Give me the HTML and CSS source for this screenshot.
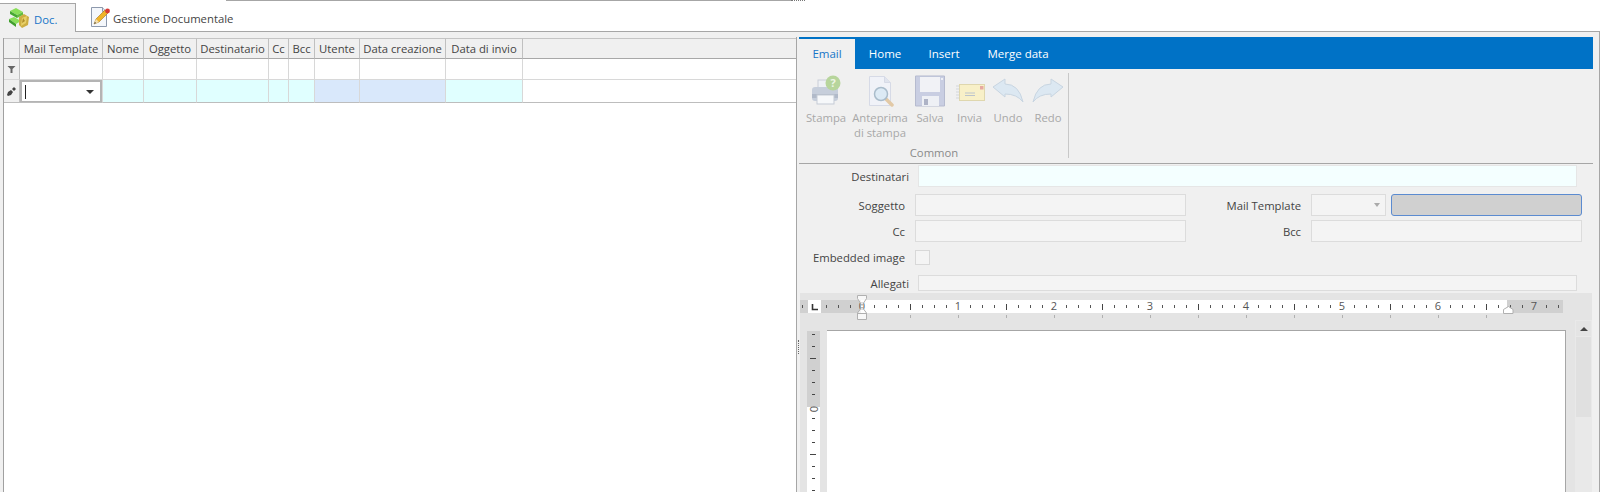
FILE: index.html
```html
<!DOCTYPE html>
<html lang="it">
<head>
<meta charset="utf-8">
<title>Doc.</title>
<link rel="stylesheet" href="styles.css">
</head>
<body>
<div class="topline"><span class="topline-solid"></span><span class="topline-dots"></span></div>
<div class="tabstrip">
  <div class="tab tab-active">
    <svg class="tab-icon" width="20" height="20" viewBox="0 0 20 20">
      <path d="M1 3l6-3 7 4-6 3z" fill="#8adf58"/><path d="M1 3l7 4v3L1 6z" fill="#46a832"/><path d="M8 7l6-3v3l-6 3z" fill="#62bd40"/>
      <path d="M0 11l5-2 7 4-5 3z" fill="#8adf58"/><path d="M0 11l7 5v3l-7-5z" fill="#3f9f2c"/>
      <path d="M10 9l5-3 5 3-1 8-6 3-3-3z" fill="#cdae42"/><path d="M13 10l5-2-1 7-5 3z" fill="#e8d068"/><path d="M14 10l2 3-3 2z" fill="#ad8c2a"/>
    </svg>
    <span>Doc.</span>
  </div>
  <div class="tab">
    <svg class="tab-icon" width="20" height="20" viewBox="0 0 20 20">
      <path d="M1.500 .5h11l4 4v15h-15z" fill="#f4f7fb" stroke="#8d99ad"/><path d="M12.500 .5v4h4" fill="#dfe5ee" stroke="#8d99ad"/>
      <path d="M4 17l2-5 9-9 3 3-9 9z" fill="#efb428" stroke="#a8741a" stroke-width=".6"/><path d="M4 17l2-5 3 3z" fill="#f3dfae"/><path d="M4 17l1-2 1 1z" fill="#333"/><circle cx="17.500" cy="4" r="2.400" fill="#d83a34"/>
    </svg>
    <span>Gestione Documentale</span>
  </div>
  <div class="tab-rest"></div>
</div>
<main class="workspace">
  <section class="list-pane">
    <div class="grid">
      <div class="cell head"></div>
      <div class="cell head">Mail Template</div>
      <div class="cell head">Nome</div>
      <div class="cell head">Oggetto</div>
      <div class="cell head">Destinatario</div>
      <div class="cell head">Cc</div>
      <div class="cell head">Bcc</div>
      <div class="cell head">Utente</div>
      <div class="cell head">Data creazione</div>
      <div class="cell head">Data di invio</div>
      <div class="cell head last"></div>

      <div class="cell indicator">
        <svg width="9" height="9" viewBox="0 0 9 9"><path d="M.5 1h8L5.500 4v4h-2V4z" fill="#666"/></svg>
      </div>
      <div class="cell"></div><div class="cell"></div><div class="cell"></div><div class="cell"></div><div class="cell"></div><div class="cell"></div><div class="cell"></div><div class="cell"></div><div class="cell"></div><div class="cell last"></div>

      <div class="cell indicator edit-row">
        <svg width="9" height="9" viewBox="0 0 9 9"><path d="M0 8l1-3 3-2 2 2-2 3-3 1z" fill="#444"/><path d="M5 2l2-2 2 2-2 2z" fill="#444"/></svg>
      </div>
      <div class="cell edit-row combo-cell"><div class="combo"><span class="caret"></span><span class="arrow"></span></div></div>
      <div class="cell edit-row cyan"></div><div class="cell edit-row cyan"></div><div class="cell edit-row cyan"></div><div class="cell edit-row cyan"></div><div class="cell edit-row cyan"></div>
      <div class="cell edit-row blue"></div><div class="cell edit-row blue"></div>
      <div class="cell edit-row cyan"></div><div class="cell edit-row last"></div>
    </div>
  </section>

  <section class="detail-pane">
    <span class="grip"></span>
    <nav class="ribbon-tabs">
      <span class="rtab rtab-active">Email</span>
      <span class="rtab rtab-home">Home</span>
      <span class="rtab rtab-insert">Insert</span>
      <span class="rtab rtab-merge">Merge data</span>
    </nav>
    <div class="ribbon">
      <div class="rgroup">
        <div class="rbuttons">
          <div class="rbtn w50">
            <svg class="ricon" width="32" height="32" viewBox="1 0 32 32">
              <rect x="9" y="5" width="16" height="10" fill="#eef1f5" stroke="#c9ced7"/>
              <path d="M3 15q0-3 3-3h20q3 0 3 3v8q0 3-3 3H6q-3 0-3-3z" fill="#c6cedb"/>
              <rect x="3" y="19" width="26" height="4" fill="#b1bac9"/>
              <rect x="8" y="20" width="17" height="9" fill="#f6f8fa" stroke="#c5cbd5"/>
              <circle cx="24" cy="8" r="7.500" fill="#b7d59c"/>
              <text x="24" y="12" class="qmark">?</text>
            </svg>
            <span>Stampa</span>
          </div>
          <div class="rbtn w58">
            <svg class="ricon" width="32" height="32" viewBox="0 0 32 32">
              <path d="M5.500 1.500h15l6 6v23h-21z" fill="#f0f2f8" stroke="#d6dae6"/>
              <path d="M20.500 1.500v6h6" fill="#e0e4ee" stroke="#d6dae6"/>
              <path d="M22 24l6 6" stroke="#e2c9a6" stroke-width="3.500" stroke-linecap="round"/>
              <circle cx="17" cy="19" r="6.500" fill="#dceaf5" stroke="#a9bccb" stroke-width="1.500"/>
            </svg>
            <span>Anteprima<br>di stampa</span>
          </div>
          <div class="rbtn w42">
            <svg class="ricon" width="32" height="32" viewBox="0 0 32 32">
              <path d="M1.500 1h29v30H1.500z" fill="#c9cee2" stroke="#b6bbcf"/>
              <rect x="6" y="2" width="20" height="15" fill="#f1f2f6"/>
              <rect x="27" y="3" width="2" height="2" fill="#eef0f6"/>
              <rect x="8" y="21" width="17" height="10" fill="#eef0f5"/>
              <rect x="10" y="24" width="4" height="6" fill="#aeb3c6"/>
            </svg>
            <span>Salva</span>
          </div>
          <div class="rbtn w37">
            <svg class="ricon" width="30" height="32" viewBox="-2 0 30 32">
              <path d="M-1 11h5M-1 14h5M-1 17h5M-1 20h5M-1 23h5" stroke="#d3d6da"/>
              <rect x="2.500" y="9.500" width="25" height="16" fill="#f8f0c8" stroke="#dfd7ae"/>
              <rect x="23" y="11" width="3.500" height="3.500" fill="#e7a9a0"/>
              <path d="M8 18h10M8 20.500h10" stroke="#bcc4cc"/>
            </svg>
            <span>Invia</span>
          </div>
          <div class="rbtn w40">
            <svg class="ricon" width="32" height="32" viewBox="0 0 32 32">
              <path d="M1 12l12-8v5q14 0 18 18q-6-8-18-8v3z" fill="#dce8f2" stroke="#c8d5e1" stroke-linejoin="round"/>
            </svg>
            <span>Undo</span>
          </div>
          <div class="rbtn w40">
            <svg class="ricon" width="32" height="32" viewBox="0 0 32 32">
              <path d="M31 12l-12-8v5q-14 0-18 18q6-8 18-8v3z" fill="#dce8f2" stroke="#c8d5e1" stroke-linejoin="round"/>
            </svg>
            <span>Redo</span>
          </div>
        </div>
        <div class="rgroup-name">Common</div>
      </div>
    </div>

    <div class="form">
      <div class="frow frow-dest">
        <label class="flabel wide">Destinatari</label>
        <div class="finput dest"></div>
      </div>
      <div class="frow frow-subject">
        <label class="flabel">Soggetto</label>
        <div class="finput half"></div>
        <label class="flabel second">Mail Template</label>
        <div class="fcombo"><span class="arrow arrow-light"></span></div>
        <div class="fbutton"></div>
      </div>
      <div class="frow frow-cc">
        <label class="flabel">Cc</label>
        <div class="finput half"></div>
        <label class="flabel second">Bcc</label>
        <div class="finput half"></div>
      </div>
      <div class="frow frow-embed">
        <label class="flabel">Embedded image</label>
        <div class="fcheck"></div>
      </div>
      <div class="frow frow-attach">
        <label class="flabel wide">Allegati</label>
        <div class="finput attach"></div>
      </div>
    </div>

    <div class="editor">
      <svg class="hruler" width="764" height="36" viewBox="0 0 764 36">
        <defs>
          <pattern id="ticks" patternUnits="userSpaceOnUse" x="62" y="6" width="96" height="13">
            <path d="M12.500 5v3M24.500 5v3M36.500 5v3M60.500 5v3M72.500 5v3M84.500 5v3" stroke="#555"/>
            <path d="M48.500 4v6" stroke="#444"/>
          </pattern>
          <pattern id="low" patternUnits="userSpaceOnUse" x="62" y="21" width="48" height="3">
            <path d="M0.500 0v3" stroke="#b0b0b0"/>
          </pattern>
        </defs>
        <rect x="0" y="6" width="763" height="13" fill="#d0d0d0"/>
        <rect x="61" y="6" width="646" height="13" fill="#fff"/>
        <rect x="0" y="6" width="763" height="13" fill="url(#ticks)"/>
        <rect x="8" y="6" width="13" height="13" fill="#fff"/>
        <path d="M12.500 10v5.500h5.500" fill="none" stroke="#333" stroke-width="1.600"/>
        <rect x="110" y="21" width="577" height="3" fill="url(#low)"/>
        <text x="62" y="16" class="rnum">0</text>
        <text x="158" y="16" class="rnum">1</text>
        <text x="254" y="16" class="rnum">2</text>
        <text x="350" y="16" class="rnum">3</text>
        <text x="446" y="16" class="rnum">4</text>
        <text x="542" y="16" class="rnum">5</text>
        <text x="638" y="16" class="rnum">6</text>
        <text x="734" y="16" class="rnum">7</text>
        <path d="M57.500 1.500h9v3L62 11.500 57.500 4.500zM62 13l4.500 6v6.500h-9V19z" fill="#fff" fill-opacity=".75" stroke="#b0b0b0"/>
        <path d="M57.500 19.500h9" stroke="#b0b0b0"/>
        <path d="M703.500 19.500v-4l5-3 4.500 3v4z" fill="#fff" stroke="#b0b0b0"/>
      </svg>
      <div class="editor-body">
        <svg class="vruler" width="13" height="161" viewBox="0 0 13 161">
          <rect width="13" height="161" fill="#fff"/>
          <rect width="13" height="76" fill="#d0d0d0"/>
          <path d="M5 3.500h3M5 15.500h3M5 39.500h3M5 51.500h3M5 63.500h3M5 87.500h3M5 99.500h3M5 111.500h3M5 135.500h3M5 147.500h3M5 159.500h3" stroke="#444"/>
          <path d="M3 27.500h6M3 123.500h6" stroke="#444"/>
          <text class="rnum" transform="translate(10.500 78) rotate(-90)" x="0" y="0">0</text>
        </svg>
        <div class="page"></div>
        <div class="scrollbar">
          <div class="sb-up"><span class="sb-arrow"></span></div>
          <div class="sb-thumb"></div>
        </div>
      </div>
    </div>
  </section>
</main>
</body>
</html>
```

FILE: styles.css
```css
* { box-sizing: border-box; }
html, body { margin: 0; height: 492px; overflow: hidden; background: #fff; }
body { font-family: "Open Sans", "Liberation Sans", sans-serif; font-size: 11.300px; color: #444; display: flex; flex-direction: column; }

.topline { height: 1px; display: flex; padding-left: 226px; flex: none; }
.topline-solid { width: 565px; height: 1px; background: #a6a6a6; }
.topline-dots { width: 14px; height: 1px; border-top: 1px dotted #777; }

.tabstrip { height: 29px; margin-top: 2px; display: flex; align-items: stretch; padding-right: 3px; flex: none; }
.tab { display: flex; align-items: center; gap: 3px; border-bottom: 1px solid #a6a6a6; color: #444; white-space: nowrap; }
.tab span { padding-top: 3px; }
.tab + .tab { padding: 0 8px 0 14px; }
.tab-active { width: 76px; gap: 5px; padding: 0 0 0 9px; background: #f0f0f0; border: 1px solid #a6a6a6; border-left: 0; border-bottom: 0; color: #1675c8; }
.tab-icon { flex: none; }
.tab-rest { flex: 1; border-bottom: 1px solid #a6a6a6; }

.workspace { flex: 1; display: flex; min-height: 0; background: #f0f0f0; padding-top: 5px; margin-right: 3px; border-right: 1px solid #a6a6a6; }

.list-pane { width: 796px; flex: none; padding: 1px 0 0 3px; }
.grid { height: 100%; background: #fff; border-left: 1px solid #a0a0a0; display: grid; grid-template-columns: 16px 83px 41px 53px 72px 20px 26px 45px 86px 77px 1fr; grid-template-rows: 21px 21px 23px; }
.cell { border-right: 1px solid #d8d8d8; border-bottom: 1px solid #d8d8d8; min-width: 0; }
.head { background: #f0f0f0; border-top: 1px solid #c4c4c4; border-right-color: #c0c0c0; border-bottom-color: #a8a8a8; display: flex; align-items: center; justify-content: center; white-space: nowrap; color: #444; }
.last { border-right: 0; }
.indicator { background: #f0f0f0; display: flex; align-items: center; justify-content: center; border-right-color: #c0c0c0; }
.edit-row { border-bottom: 1px solid #bdbdbd; }
.cyan { background: #e0ffff; }
.blue { background: #d9e8fb; }
.combo-cell { padding: 0; background: #fff; }
.combo { height: 100%; border: 2px solid #b4b4b4; border-bottom-width: 1px; display: flex; align-items: center; justify-content: space-between; padding: 0 6px 0 3px; }
.caret { width: 1px; height: 14px; background: #222; }
.arrow { width: 0; height: 0; border-left: 4px solid transparent; border-right: 4px solid transparent; border-top: 4px solid #333; }
.arrow-light { border-top-color: #aaa; border-left-width: 3.500px; border-right-width: 3.500px; }

.detail-pane { flex: 1; min-width: 0; border-left: 1px solid #a6a6a6; padding: 0 6px 0 2px; position: relative; display: flex; flex-direction: column; }
.grip { position: absolute; left: 1px; top: 303px; width: 1px; height: 14px; border-left: 1px dotted #666; }

.ribbon-tabs { height: 32px; background: #0072c6; display: flex; align-items: flex-end; color: #fff; flex: none; }
.rtab { height: 30px; font-size: 11.500px; display: flex; align-items: center; justify-content: center; padding-bottom: 2px; }
.rtab-active { width: 56px; background: #f0f0f0; color: #1675c8; }
.rtab-home { width: 60px; }
.rtab-insert { width: 58px; }
.rtab-merge { width: 90px; }

.ribbon { height: 95px; flex: none; border-bottom: 1px solid #a6a6a6; padding: 4px 0 0 2px; }
.rgroup { width: 268px; height: 85px; border-right: 1px solid #c8c8c8; display: flex; flex-direction: column; }
.rbuttons { display: flex; height: 75px; flex: none; }
.rbtn { display: flex; flex-direction: column; align-items: center; color: #a8a8a8; text-align: center; line-height: 15px; }
.w50 { width: 50px; } .w58 { width: 58px; } .w42 { width: 42px; } .w37 { width: 37px; } .w40 { width: 40px; }
.ricon { flex: none; margin-bottom: 3px; margin-top: 2px; }
.qmark { font: bold 11px "Open Sans", sans-serif; fill: #eef5e6; text-anchor: middle; }
.rgroup-name { text-align: center; color: #8a8a8a; line-height: 10px; padding-right: 1px; flex: none; }

.form { flex: none; height: 129px; display: flex; flex-direction: column; color: #444; }
.frow { display: flex; align-items: center; flex: none; }
.frow-dest { height: 22px; margin-top: 1px; }
.frow-subject { height: 22px; margin-top: 7px; }
.frow-cc { height: 22px; margin-top: 4px; }
.frow-embed { height: 15px; margin-top: 8px; }
.frow-attach { height: 16px; margin-top: 10px; }
.flabel { width: 106px; text-align: right; margin-right: 10px; white-space: nowrap; flex: none; }
.flabel.wide { width: 110px; margin-right: 9px; }
.flabel.second { width: 115px; }
.finput { height: 100%; border: 1px solid #dcdcdc; background: #f4f4f4; }
.half { width: 271px; }
.dest { width: 659px; background: #f4ffff; border-color: #e6e6e6; }
.attach { width: 659px; }
.fcombo { width: 75px; height: 100%; border: 1px solid #dcdcdc; background: #f4f4f4; display: flex; align-items: center; justify-content: flex-end; padding-right: 5px; }
.fbutton { width: 191px; height: 100%; margin-left: 5px; background: #d0d0d0; border: 1px solid #5b8bd0; border-radius: 3px; }
.fcheck { width: 15px; height: 15px; border: 1px solid #d8d8d8; background: #f4f4f4; }

.editor { flex: 1; min-height: 0; margin: 0 1px; background: #e4e4e4; overflow: hidden; display: flex; flex-direction: column; }
.hruler { display: block; flex: none; margin-top: 1px; }
.rnum { font: 11px "Open Sans", sans-serif; fill: #555; text-anchor: middle; }
.editor-body { flex: 1; display: flex; align-items: flex-start; min-height: 0; }
.vruler { flex: none; margin: 1px 7px 0 7px; display: block; }
.page { width: 739px; height: 170px; background: #fff; border-top: 1px solid #a6a6a6; border-right: 1px solid #a6a6a6; flex: none; }
.scrollbar { width: 17px; height: 172px; margin: -10px 0 0 9px; background: #e9e9e9; padding: 1px 1px 0 1px; flex: none; display: flex; flex-direction: column; gap: 1px; }
.sb-up { height: 15px; background: #e4e4e4; display: flex; align-items: center; justify-content: center; }
.sb-arrow { width: 0; height: 0; border-left: 4px solid transparent; border-right: 4px solid transparent; border-bottom: 4px solid #444; }
.sb-thumb { height: 80px; background: #e0e0e0; }
```
